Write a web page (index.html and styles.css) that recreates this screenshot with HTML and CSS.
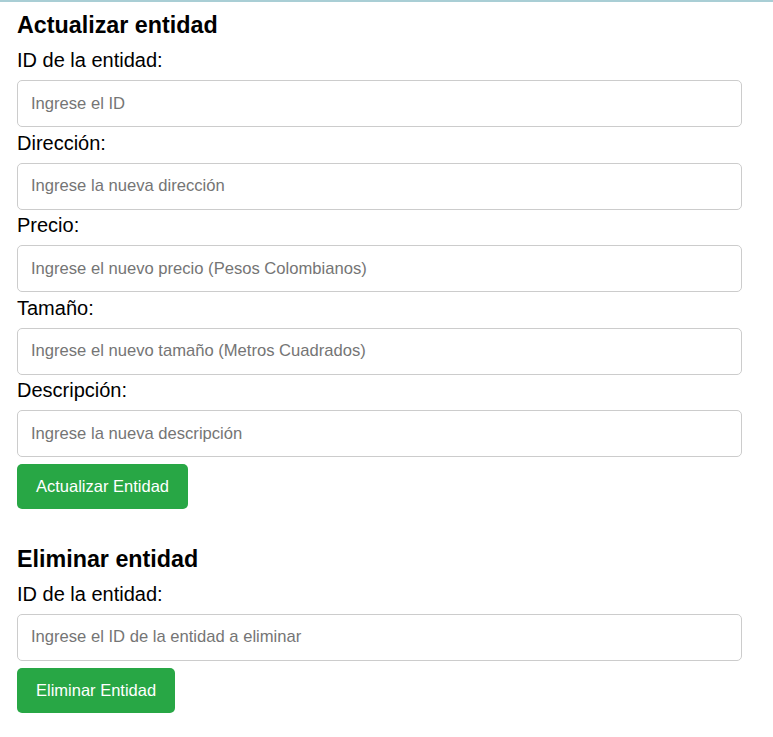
FILE: index.html
```html
<!DOCTYPE html>
<html lang="es">
<head>
<meta charset="utf-8">
<title>Entidades</title>
<link rel="stylesheet" href="styles.css">
</head>
<body>
<div class="page">
  <section class="panel">
    <h2 class="title">Actualizar entidad</h2>
    <form class="form">
      <label class="label" for="uid">ID de la entidad:</label>
      <input class="field" id="uid" type="text" placeholder="Ingrese el ID">
      <label class="label" for="dir">Dirección:</label>
      <input class="field" id="dir" type="text" placeholder="Ingrese la nueva dirección">
      <label class="label" for="pre">Precio:</label>
      <input class="field" id="pre" type="text" placeholder="Ingrese el nuevo precio (Pesos Colombianos)">
      <label class="label" for="tam">Tamaño:</label>
      <input class="field" id="tam" type="text" placeholder="Ingrese el nuevo tamaño (Metros Cuadrados)">
      <label class="label" for="des">Descripción:</label>
      <input class="field" id="des" type="text" placeholder="Ingrese la nueva descripción">
      <button class="btn" type="button">Actualizar Entidad</button>
    </form>
  </section>
  <section class="panel panel-second">
    <h2 class="title">Eliminar entidad</h2>
    <form class="form">
      <label class="label" for="did">ID de la entidad:</label>
      <input class="field" id="did" type="text" placeholder="Ingrese el ID de la entidad a eliminar">
      <button class="btn" type="button">Eliminar Entidad</button>
    </form>
  </section>
</div>
</body>
</html>
```
FILE: styles.css
```css
html, body {
  margin: 0;
  padding: 0;
  background: #ffffff;
}
body {
  font-family: "Liberation Sans", Arial, sans-serif;
  color: #000;
}
.page {
  border-top: 2px solid #a9ced5;
  padding: 10px 31px 0 17px;
}
.panel-second {
  margin-top: 37px;
}
.title {
  font-size: 23.3px;
  font-weight: bold;
  margin: 0 0 10px;
}
.form {
  display: flex;
  flex-direction: column;
  align-items: flex-start;
}
.label {
  font-size: 20px;
  margin-bottom: 8px;
}
.field {
  box-sizing: border-box;
  width: 100%;
  height: 47px;
  padding: 0 13px;
  font-family: "Liberation Sans", Arial, sans-serif;
  font-size: 16.6px;
  border: 1px solid #cccccc;
  border-radius: 5px;
  background: #fff;
  margin: 0 0 4.5px;
}
.field::placeholder {
  color: #757575;
}
.btn {
  margin-top: 2.3px;
  height: 45px;
  padding: 0 19px;
  background: #28a745;
  color: #fff;
  border: none;
  border-radius: 5px;
  font-family: "Liberation Sans", Arial, sans-serif;
  font-size: 16.5px;
}
```
